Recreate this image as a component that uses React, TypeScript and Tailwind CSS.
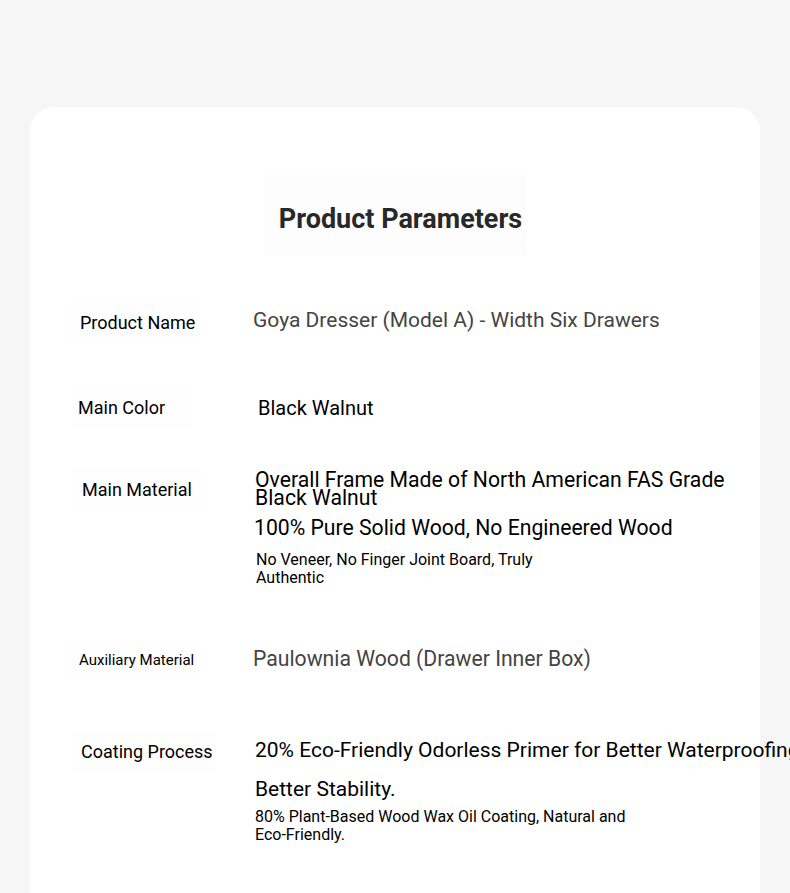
import React from 'react';

const font = { fontFamily: 'Roboto, "Noto Sans", sans-serif' };

export default function App() {
  return (
    <div className="min-h-screen w-full overflow-x-hidden bg-[#f6f6f6] pt-[107px] pl-[30px]" style={font}>
      <div className="w-[730px] h-[820px] rounded-t-[24px] bg-white pt-[68px]">
        {/* title */}
        <div className="mx-auto flex h-[80px] w-[263px] items-center justify-center bg-[#fdfdfd] pl-[11px] pt-[8px]">
          <h2 className="text-[27px] font-bold leading-[32px] text-[#282828]">Product Parameters</h2>
        </div>

        <div className="mt-[45px] pl-[48px]">
          {/* Product Name */}
          <div className="flex h-[85px] items-start">
            <div className="w-[175px]">
              <div className="ml-[-10px] w-fit bg-[#fefefe] pl-[12px] pr-[6px] pt-[11px] pb-[10px] text-[18px] leading-[24px] text-black">
                Product Name
              </div>
            </div>
            <div className="pt-[6px] text-[21px] leading-[28px] text-[#444]">
              Goya Dresser (Model A) - Width Six Drawers
            </div>
          </div>

          {/* Main Color */}
          <div className="flex h-[81px] items-start">
            <div className="w-[180px]">
              <div className="ml-[-6px] w-fit bg-[#fefefe] pl-[6px] pr-[28px] pt-[11px] pb-[10px] text-[18px] leading-[24px] text-black">
                Main Color
              </div>
            </div>
            <div className="pt-[10px] text-[20px] leading-[26px] text-black">Black Walnut</div>
          </div>

          {/* Main Material */}
          <div className="flex h-[174px] items-start">
            <div className="w-[177px]">
              <div className="ml-[-6px] w-fit bg-[#fefefe] pl-[10px] pr-[10px] pt-[12px] pb-[10px] text-[18px] leading-[24px] text-black">
                Main Material
              </div>
            </div>
            <div className="pt-[5px] text-black">
              <div className="w-[480px] text-[21.2px] leading-[18px]">
                Overall Frame Made of North American FAS Grade Black Walnut
              </div>
              <div className="mt-[7px] ml-[-1px] text-[21.2px] leading-[28px]">
                100% Pure Solid Wood, No Engineered Wood
              </div>
              <div className="mt-[9px] ml-[1px] w-[320px] text-[16px] leading-[18px]">
                No Veneer, No Finger Joint Board, Truly Authentic
              </div>
            </div>
          </div>

          {/* Auxiliary Material */}
          <div className="flex h-[90px] items-start">
            <div className="w-[175px]">
              <div className="ml-[-9px] w-fit bg-[#fefefe] pl-[10px] pr-[6px] pt-[10px] pb-[10px] text-[15px] leading-[20px] text-black">
                Auxiliary Material
              </div>
            </div>
            <div className="pt-[5px] text-[21.2px] leading-[28px] text-[#444]">
              Paulownia Wood (Drawer Inner Box)
            </div>
          </div>

          {/* Coating Process */}
          <div className="flex items-start">
            <div className="w-[177px] shrink-0">
              <div className="ml-[-6px] w-fit bg-[#fefefe] pl-[9px] pr-[4px] pt-[10px] pb-[10px] text-[18px] leading-[24px] text-black">
                Coating Process
              </div>
            </div>
            <div className="shrink-0 pt-[1px] text-black">
              <div className="w-[620px] text-[21px] leading-[39px]">
                20% Eco-Friendly Odorless Primer for Better Waterproofing and Better Stability.
              </div>
              <div className="mt-[-1px] w-[400px] text-[16px] leading-[18px]">
                80% Plant-Based Wood Wax Oil Coating, Natural and Eco-Friendly.
              </div>
            </div>
          </div>
        </div>
      </div>
    </div>
  );
}
